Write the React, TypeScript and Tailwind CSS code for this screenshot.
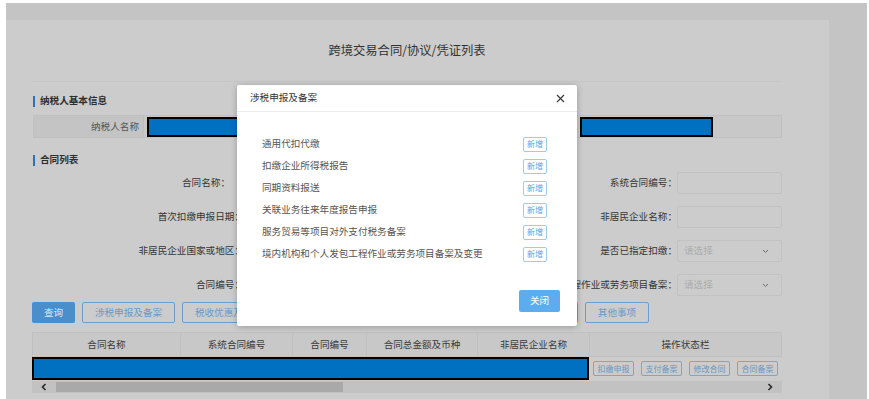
import React from "react";

const rows = [
  { left: "合同名称：", leftPad: true, mid: true, right: "系统合同编号：", type: "input" },
  { left: "首次扣缴申报日期：", leftPad: false, mid: true, right: "非居民企业名称：", type: "input" },
  { left: "非居民企业国家或地区：", leftPad: false, mid: true, right: "是否已指定扣缴：", type: "select" },
  { left: "合同编号：", leftPad: false, mid: false, right: "境内机构和个人发包工程作业或劳务项目备案：", type: "select" },
];

const modalItems = [
  "通用代扣代缴",
  "扣缴企业所得税报告",
  "同期资料报送",
  "关联业务往来年度报告申报",
  "服务贸易等项目对外支付税务备案",
  "境内机构和个人发包工程作业或劳务项目备案及变更",
];

function Chevron() {
  return (
    <svg width="7" height="5" viewBox="0 0 7 5" fill="none">
      <path d="M1 1l2.5 2.5L6 1" stroke="#6a6a6a" strokeWidth="1" />
    </svg>
  );
}

export default function App() {
  return (
    <div className="relative w-[869px] h-[399px] bg-white pt-[3px] pl-[6px] pr-[2px] overflow-hidden font-['Noto_Sans_CJK_SC','Microsoft_YaHei',sans-serif] text-[9.6px] leading-none text-[#353535]">
      <div className="flex h-[396px] bg-[#c4c4c4]">
        <div className="mt-[17px] w-[823px] h-[379px] bg-[#cccccc] pl-[26px]">
          <div className="w-[750px]">
            {/* Title */}
            <div className="h-[62px] flex items-center justify-center border-b border-[#c6c6c6] text-[12.3px] text-[#333]">
              跨境交易合同/协议/凭证列表
            </div>

            {/* Section 1 */}
            <div className="mt-[13px] h-[12px] flex items-center pl-[1px]">
              <div className="w-[2px] h-[11px] bg-[#2a72c0]" />
              <span className="ml-[5px] font-bold text-[#2e2e2e]">纳税人基本信息</span>
            </div>
            <div className="mt-[8px] ml-[1px] h-[23px] flex border border-[#c0c0c0] bg-[#c8c8c8]">
              <div className="w-[110px] h-full flex items-center justify-end pr-[4px] bg-[#c4c4c4] border-r border-[#bdbdbd] text-[#555]">
                纳税人名称
              </div>
              <div className="w-[323px] h-full flex items-center pl-[3px]">
                <div className="w-[137px] h-[20px] bg-[#0070c0] border-2 border-black" />
              </div>
              <div className="w-[110px] h-full bg-[#c4c4c4] border-x border-[#bdbdbd]" />
              <div className="flex-1 h-full flex items-center pl-[3px]">
                <div className="w-[133px] h-[20px] bg-[#0070c0] border-2 border-black" />
              </div>
            </div>

            {/* Section 2 */}
            <div className="mt-[16px] h-[12px] flex items-center pl-[1px]">
              <div className="w-[2px] h-[11px] bg-[#2a72c0]" />
              <span className="ml-[5px] font-bold text-[#2e2e2e]">合同列表</span>
            </div>

            <div className="mt-[6px] flex flex-col gap-[12px]">
              {rows.map((r, i) => (
                <div key={i} className="flex h-[22px]">
                  <div className={`w-[212px] flex items-center justify-end whitespace-nowrap ${r.leftPad ? "pr-[14px]" : ""}`}>
                    {r.left}
                  </div>
                  <div className="w-[105px] border border-[#c2c2c2] rounded-[2px]" />
                  <div className="w-[113px]" />
                  <div className="w-[105px]">
                    {r.mid ? <div className="h-full border border-[#c2c2c2] rounded-[2px]" /> : null}
                  </div>
                  <div className="w-[110px] flex items-center justify-end whitespace-nowrap">{r.right}</div>
                  <div className="w-[105px] border border-[#c2c2c2] rounded-[2px] flex items-center justify-between pl-[6px] pr-[12px]">
                    {r.type === "select" ? (
                      <>
                        <span className="text-[#adadad]">请选择</span>
                        <Chevron />
                      </>
                    ) : null}
                  </div>
                </div>
              ))}
            </div>

            {/* Buttons */}
            <div className="mt-[6px] flex h-[21px] gap-[7px]">
              <div className="w-[43px] flex items-center justify-center bg-[#4a8ecb] text-[#dce8f4] rounded-[2px]">查询</div>
              {[
                ["涉税申报及备案", "w-[93px]"],
                ["税收优惠及备案", "w-[93px]"],
                ["", "w-[93px]"],
                ["", "w-[93px]"],
                ["", "w-[96px]"],
                ["其他事项", "w-[64px]"],
              ].map(([t, w], i) => (
                <div key={i} className={`${w} flex items-center justify-center border border-[#6c9fcf] text-[#6b9ac6] rounded-[2px] whitespace-nowrap`}>
                  {t}
                </div>
              ))}
            </div>

            {/* Table */}
            <div className="mt-[9px]">
              <div className="flex h-[25px] bg-[#c8c8c8] border border-[#c0c0c0] text-[#3a3a3a]">
                {[
                  ["合同名称", "w-[148px]"],
                  ["系统合同编号", "w-[112px]"],
                  ["合同编号", "w-[74px]"],
                  ["合同总金额及币种", "w-[111px]"],
                  ["非居民企业名称", "w-[112px]"],
                  ["操作状态栏", "flex-1"],
                ].map(([t, w], i) => (
                  <div key={t} className={`${w} flex items-center justify-center ${i < 5 ? "border-r border-[#c0c0c0]" : ""}`}>
                    {t}
                  </div>
                ))}
              </div>
              <div className="flex h-[23px]">
                <div className="w-[557px] h-full bg-[#0070c0] border-2 border-black" />
                <div className="flex-1 flex items-center pl-[4px] gap-[7px]">
                  {["扣缴申报", "支付备案", "修改合同", "合同备案"].map((t) => (
                    <div key={t} className="w-[41px] h-[15px] flex items-center justify-center border border-[#7aa6d0] text-[#6b97c2] text-[8px] rounded-[2px]">
                      {t}
                    </div>
                  ))}
                </div>
              </div>
              {/* Scrollbar */}
              <div className="mt-[1px] h-[12px] flex items-center bg-[#c2c2c2]">
                <div className="w-[24px] h-full flex items-center justify-center">
                  <svg width="6" height="8" viewBox="0 0 6 8" fill="none">
                    <path d="M4.5 1L1.5 4l3 3" stroke="#2a2a2a" strokeWidth="1.6" />
                  </svg>
                </div>
                <div className="w-[287px] h-[10px] bg-[#a9a9a9]" />
                <div className="flex-1" />
                <div className="w-[24px] h-full flex items-center justify-center">
                  <svg width="6" height="8" viewBox="0 0 6 8" fill="none">
                    <path d="M1.5 1l3 3-3 3" stroke="#2a2a2a" strokeWidth="1.6" />
                  </svg>
                </div>
              </div>
            </div>
          </div>
        </div>
      </div>

      {/* Modal */}
      <div className="absolute left-[237px] top-[85px] w-[340px] h-[241px] bg-white rounded-[2px] shadow-[0_1px_6px_rgba(0,0,0,0.25)]">
        <div className="h-[27px] flex items-center justify-between pl-[13px] pr-[12px] border-b border-[#ebebeb]">
          <span className="text-[#333]">涉税申报及备案</span>
          <svg width="9" height="9" viewBox="0 0 9 9" fill="none">
            <path d="M1 1l7 7M8 1L1 8" stroke="#333" strokeWidth="1.1" />
          </svg>
        </div>
        <div className="pt-[21px] pl-[25px] pr-[30px]">
          {modalItems.map((t) => (
            <div key={t} className="h-[22px] flex items-center justify-between text-[#555]">
              <span>{t}</span>
              <div className="w-[24px] h-[15px] flex items-center justify-center border border-[#9ccbf3] text-[#5aa6ea] text-[8px] rounded-[2px]">
                新增
              </div>
            </div>
          ))}
        </div>
        <div className="mt-[25px] flex justify-end pr-[17px]">
          <div className="w-[41px] h-[22px] flex items-center justify-center bg-[#5cadf0] text-white rounded-[2px]">关闭</div>
        </div>
      </div>
    </div>
  );
}
